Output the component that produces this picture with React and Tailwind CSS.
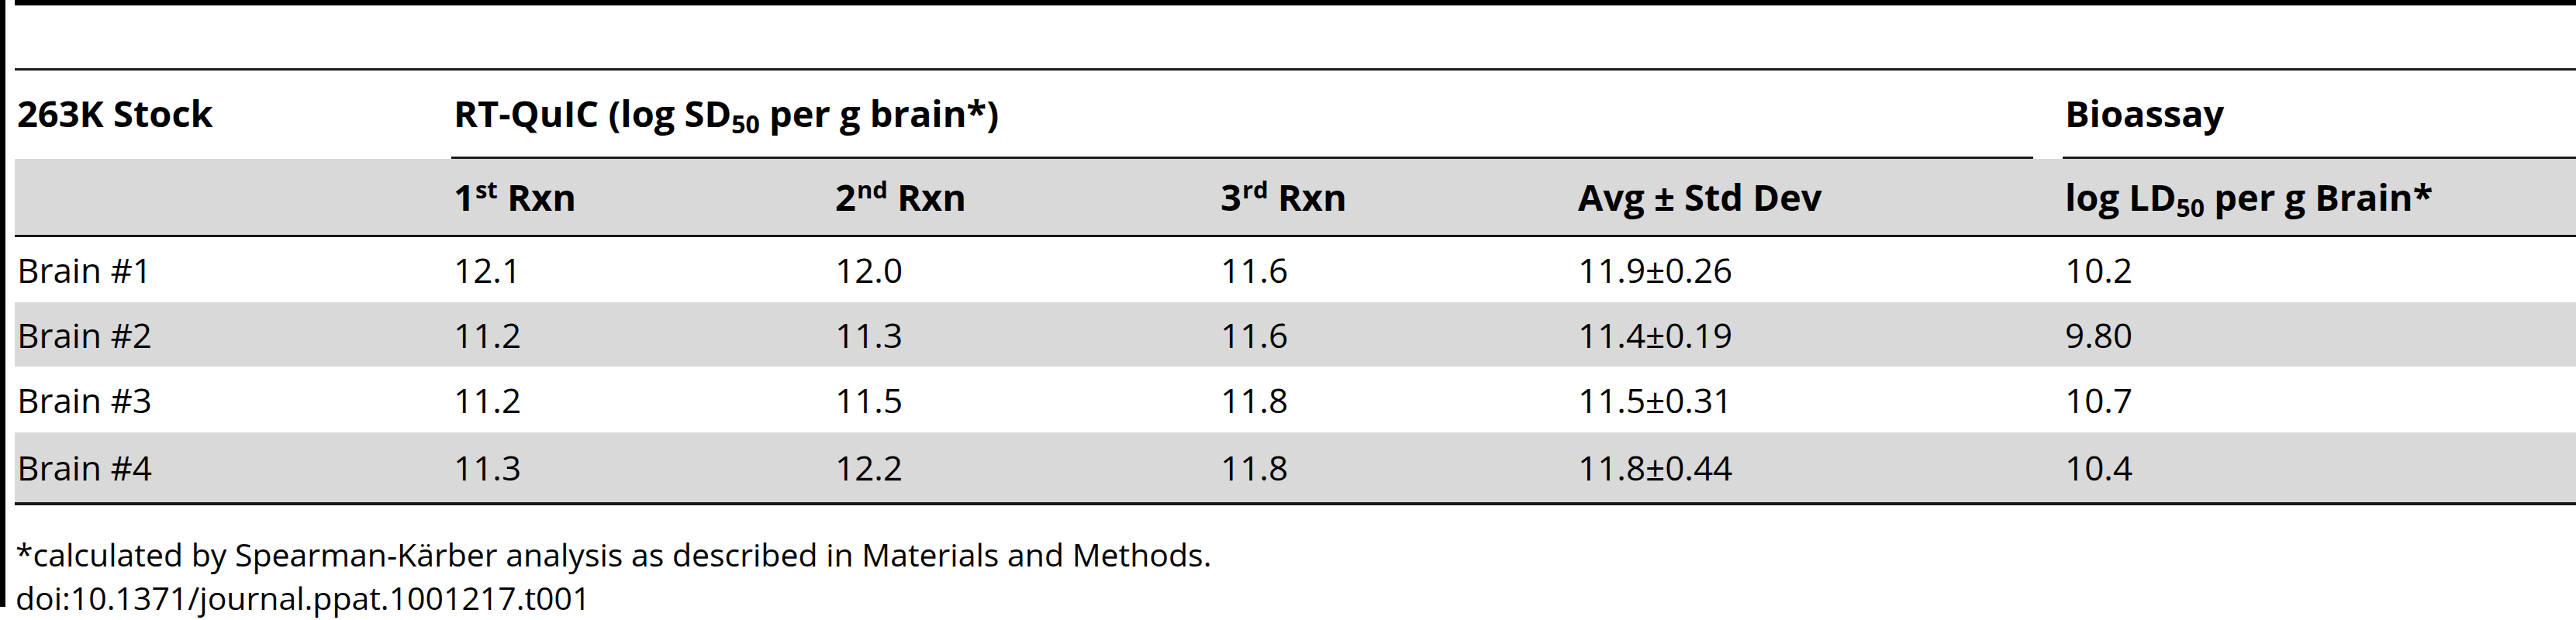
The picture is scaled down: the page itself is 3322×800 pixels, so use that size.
import React from 'react';

const grid = 'grid grid-cols-[563px_492px_497px_461px_628px_1fr]';

const rows = [
  { name: 'Brain #1', r1: '12.1', r2: '12.0', r3: '11.6', avg: '11.9±0.26', bio: '10.2', cls: 'h-[84px] bg-white' },
  { name: 'Brain #2', r1: '11.2', r2: '11.3', r3: '11.6', avg: '11.4±0.19', bio: '9.80', cls: 'h-[83px] bg-[#d9d9d9]' },
  { name: 'Brain #3', r1: '11.2', r2: '11.5', r3: '11.8', avg: '11.5±0.31', bio: '10.7', cls: 'h-[85px] bg-white' },
  { name: 'Brain #4', r1: '11.3', r2: '12.2', r3: '11.8', avg: '11.8±0.44', bio: '10.4', cls: 'h-[90px] bg-[#d9d9d9]' },
];

const Cell = ({ children, className = '' }) => (
  <div className={`flex items-center pl-[3px] whitespace-nowrap ${className}`}>{children}</div>
);

const Rxn = ({ n, sfx }) => (
  <span>
    {n}
    <sup className="text-[31px] ml-[1px]">{sfx}</sup> Rxn
  </span>
);

export default function App() {
  return (
    <div className="flex w-[3322px] h-[800px] overflow-hidden bg-white text-black font-['Open_Sans',sans-serif]">
      {/* left rule */}
      <div className="w-[7px] h-[783px] bg-black shrink-0" />

      <div className="ml-[12px] flex-1 flex flex-col">
        <div className="h-[7px] bg-black" />
        <div className="h-[81px]" />
        <div className="h-[3px] bg-[#1a1a1a]" />

        {/* header row A */}
        <div className={`${grid} h-[114px] text-[47px] font-bold`}>
          <Cell className="h-[111px]">263K Stock</Cell>
          <div className="col-span-4 flex flex-col">
            <Cell className="flex-1">
              <span>
                RT-QuIC (log SD<sub className="text-[32px]">50</sub> per g brain*)
              </span>
            </Cell>
            <div className="h-[3px] bg-[#1a1a1a] mr-[38px]" />
          </div>
          <div className="flex flex-col">
            <Cell className="flex-1">Bioassay</Cell>
            <div className="h-[3px] bg-[#1a1a1a]" />
          </div>
        </div>

        {/* header row B */}
        <div className={`${grid} h-[98px] bg-[#d9d9d9] text-[47px] font-bold`}>
          <Cell />
          <Cell><Rxn n="1" sfx="st" /></Cell>
          <Cell><Rxn n="2" sfx="nd" /></Cell>
          <Cell><Rxn n="3" sfx="rd" /></Cell>
          <Cell>Avg ± Std Dev</Cell>
          <Cell>
            <span>
              log LD<sub className="text-[32px]">50</sub> per g Brain*
            </span>
          </Cell>
        </div>
        <div className="h-[3px] bg-[#1a1a1a]" />

        {/* body */}
        {rows.map((r) => (
          <div key={r.name} className={`${grid} ${r.cls} text-[44px]`}>
            <Cell>{r.name}</Cell>
            <Cell>{r.r1}</Cell>
            <Cell>{r.r2}</Cell>
            <Cell>{r.r3}</Cell>
            <Cell>{r.avg}</Cell>
            <Cell>{r.bio}</Cell>
          </div>
        ))}
        <div className="h-[4px] bg-[#1a1a1a]" />

        {/* footnotes */}
        <div className="mt-[35px] pl-[1px] text-[41px] leading-[56px] whitespace-nowrap">
          <p>*calculated by Spearman-Kärber analysis as described in Materials and Methods.</p>
          <p>doi:10.1371/journal.ppat.1001217.t001</p>
        </div>
      </div>
    </div>
  );
}
